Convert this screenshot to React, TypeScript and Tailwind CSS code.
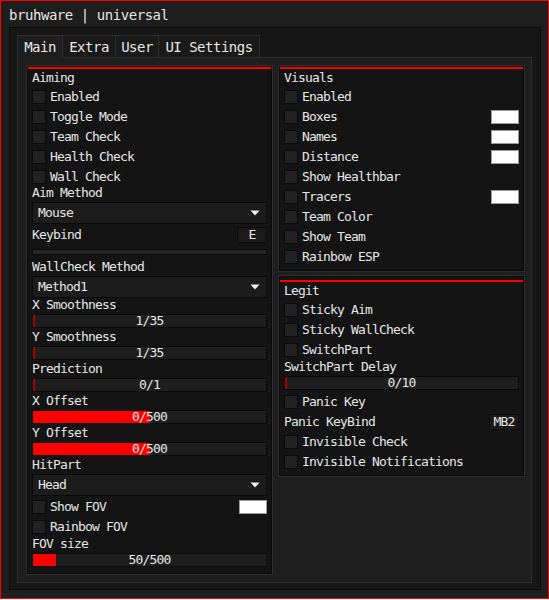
const mono = "font-['DejaVu_Sans_Mono',monospace]";

function Box() {
  return <div className="w-[14px] h-[14px] border border-[#0a0a0a] bg-[#222222] shrink-0" />;
}

function Swatch() {
  return <div className="w-[28px] h-[14px] border border-[#9a9a9a] bg-white shrink-0" />;
}

function Check({ label, swatch }: { label: string; swatch?: boolean }) {
  return (
    <div className="h-[20px] flex items-center">
      <Box />
      <span className="ml-[4px] leading-[12px]">{label}</span>
      {swatch && <div className="ml-auto"><Swatch /></div>}
    </div>
  );
}

function Label({ text, h = 16, pt = 1 }: { text: string; h?: number; pt?: number }) {
  return (
    <div className={h === 15 ? 'h-[15px]' : 'h-[16px]'}>
      <div className={`leading-[12px] ${pt === 1 ? 'pt-[1px]' : ''}`}>{text}</div>
    </div>
  );
}

function Dropdown({ value }: { value: string }) {
  return (
    <div className="h-[22px] border border-[#0a0a0a] bg-[#1c1c1c] flex items-center justify-between pl-[5px] pr-[6px]">
      <span className="leading-[12px]">{value}</span>
      <svg width="10" height="6" viewBox="0 0 10 6">
        <polygon points="0.5,0.5 9.5,0.5 5,5.5" fill="#f0f0f0" />
      </svg>
    </div>
  );
}

function KeyRow({ label, k }: { label: string; k: string }) {
  return (
    <div className="h-[20px] flex items-center justify-between">
      <span className="leading-[12px]">{label}</span>
      <div className="w-[30px] h-[16px] border border-[#0a0a0a] bg-[#1a1a1a] flex items-center justify-center leading-[12px]">
        {k}
      </div>
    </div>
  );
}

function Slider({ text, pct, mb = true }: { text: string; pct: number; mb?: boolean }) {
  const sliver = pct === 0;
  return (
    <div className={`relative h-[14px] border border-[#0a0a0a] bg-[#1e1e1e] ${mb ? 'mb-[2px]' : ''}`}>
      <div
        className={`h-full ${sliver ? 'bg-[#b00000]' : 'bg-[#ff0000]'}`}
        style={{ width: sliver ? 2 : `${pct}%` }}
      />
      <div className="absolute inset-0 flex items-center justify-center leading-[12px]">{text}</div>
    </div>
  );
}

function Section({
  title,
  children,
  grow,
  gapTop,
}: {
  title: string;
  children: React.ReactNode;
  grow?: boolean;
  gapTop?: boolean;
}) {
  return (
    <div className={`border border-[#2e2e2e] ${grow ? 'h-full' : ''}`}>
      <div className={`border border-[#0a0a0a] bg-[#141414] h-full flex flex-col ${gapTop ? 'pt-[3px]' : ''}`}>
        <div className="h-[2px] bg-[#ff0000] shrink-0" />
        <div className="px-[4px] pb-[3px] flex flex-col">
          <div className="h-[18px] pt-[3px] leading-[12px]">{title}</div>
          {children}
        </div>
      </div>
    </div>
  );
}

export default function App() {
  return (
    <div className={`${mono} text-[#e6e6e6] text-[13px] tracking-[-0.83px]`}>
      <div className="w-[549px] h-[599px] border border-[#ff0000] bg-[#1e1e1e] flex flex-col">
        <div className="h-[26px] pl-[8px] pt-[6px] text-[14px] tracking-[-0.45px] leading-[16px]">
          bruhware | universal
        </div>
        <div className="ml-[8px] w-[532px] h-[563px] border border-[#0b0b0b] bg-[#161616] pl-[7px] pr-[8px] pt-[7px] pb-[6px] flex flex-col">
          <div className="flex h-[23px] text-[14px] tracking-[-0.5px] leading-[16px]">
            <div className="w-[45px] border-t border-l border-[#2e2e2e] bg-[#1e1e1e] flex items-center justify-center">Main</div>
            <div className="w-[53px] border-t border-l border-b border-[#2e2e2e] bg-[#1a1a1a] flex items-center justify-center">Extra</div>
            <div className="w-[43px] border-t border-l border-b border-[#2e2e2e] bg-[#1a1a1a] flex items-center justify-center">User</div>
            <div className="w-[102px] border border-[#2e2e2e] bg-[#1a1a1a] flex items-center justify-center">UI Settings</div>
            <div className="flex-1 border-b border-[#2e2e2e]" />
          </div>
          <div className="flex-1 border-x border-b border-[#2e2e2e] bg-[#1e1e1e] pl-[8px] pt-[7px] pb-[7px] flex gap-[5px]">
            <div className="w-[247px]">
              <Section title="Aiming" grow>
                <Check label="Enabled" />
                <Check label="Toggle Mode" />
                <Check label="Team Check" />
                <Check label="Health Check" />
                <Check label="Wall Check" />
                <Label text="Aim Method" h={15} pt={0} />
                <Dropdown value="Mouse" />
                <div className="h-[22px] flex items-center justify-between">
                  <span className="leading-[12px]">Keybind</span>
                  <div className="w-[30px] h-[16px] border border-[#0a0a0a] bg-[#1a1a1a] flex items-center justify-center leading-[12px]">E</div>
                </div>
                <div className="mt-[3px] mb-[5px] h-[6px] border border-[#0a0a0a] bg-[#262626]" />
                <Label text="WallCheck Method" />
                <Dropdown value="Method1" />
                <Label text="X Smoothness" />
                <Slider text="1/35" pct={0} />
                <Label text="Y Smoothness" />
                <Slider text="1/35" pct={0} />
                <Label text="Prediction" />
                <Slider text="0/1" pct={0} />
                <Label text="X Offset" />
                <Slider text="0/500" pct={50} />
                <Label text="Y Offset" />
                <Slider text="0/500" pct={50} />
                <Label text="HitPart" />
                <Dropdown value="Head" />
                <div className="mt-[1px]">
                  <Check label="Show FOV" swatch />
                </div>
                <Check label="Rainbow FOV" />
                <Label text="FOV size" />
                <Slider text="50/500" pct={10} mb={false} />
              </Section>
            </div>
            <div className="w-[247px] flex flex-col gap-[3px] self-start">
              <Section title="Visuals">
                <Check label="Enabled" />
                <Check label="Boxes" swatch />
                <Check label="Names" swatch />
                <Check label="Distance" swatch />
                <Check label="Show Healthbar" />
                <Check label="Tracers" swatch />
                <Check label="Team Color" />
                <Check label="Show Team" />
                <Check label="Rainbow ESP" />
              </Section>
              <Section title="Legit" gapTop>
                <Check label="Sticky Aim" />
                <Check label="Sticky WallCheck" />
                <Check label="SwitchPart" />
                <Label text="SwitchPart Delay" />
                <Slider text="0/10" pct={0} />
                <Check label="Panic Key" />
                <KeyRow label="Panic KeyBind" k="MB2" />
                <Check label="Invisible Check" />
                <Check label="Invisible Notifications" />
              </Section>
            </div>
          </div>
        </div>
      </div>
    </div>
  );
}
